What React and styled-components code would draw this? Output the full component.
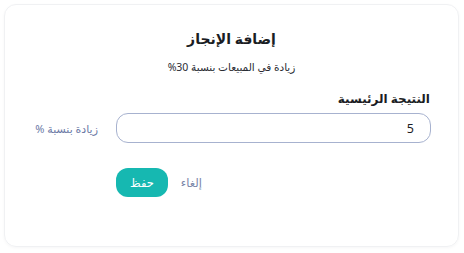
import React from 'react';
import styled, { createGlobalStyle } from 'styled-components';

const GlobalStyle = createGlobalStyle`
  html, body {
    margin: 0;
    padding: 0;
    background: #ffffff;
  }
  body {
    font-family: "Noto Sans", "DejaVu Sans", sans-serif;
  }
`;

const Page = styled.div`
  width: 464px;
  height: 253px;
  padding: 4px 5px 6px 4px;
  box-sizing: border-box;
`;

const Card = styled.div`
  direction: rtl;
  height: 100%;
  box-sizing: border-box;
  border: 1px solid #f0f1f3;
  border-radius: 12px;
  box-shadow: 0 1px 3px rgba(20, 30, 60, 0.04);
  padding: 23px 27px 0 27px;
  display: flex;
  flex-direction: column;
`;

const Title = styled.h2`
  margin: 0;
  text-align: center;
  font-size: 14px;
  font-weight: 700;
  color: #1b1d24;
  line-height: 22px;
`;

const Subtitle = styled.p`
  margin: 9px 0 0;
  text-align: center;
  font-size: 10.5px;
  color: #2a2c33;
  line-height: 16px;
`;

const FieldLabel = styled.div`
  margin-top: 15px;
  font-size: 12px;
  font-weight: 700;
  color: #1b1d24;
  line-height: 18px;
  padding-right: 1px;
`;

const FieldRow = styled.div`
  margin-top: 5px;
  display: flex;
  align-items: center;
  gap: 18px;
`;

const Input = styled.input`
  width: 315px;
  height: 30px;
  box-sizing: border-box;
  border: 1px solid #a7b2cf;
  border-radius: 12px;
  padding: 0 16px;
  font-family: inherit;
  font-size: 12.5px;
  color: #1b1d24;
  direction: rtl;
  outline: none;
  background: #fff;
`;

const Suffix = styled.span`
  font-size: 11px;
  color: #6c7aa6;
  white-space: nowrap;
`;

const Actions = styled.div`
  width: 315px;
  margin-top: 25px;
  display: flex;
  justify-content: flex-end;
  align-items: center;
  gap: 13px;
`;

const Button = styled.button`
  font-family: inherit;
  border: none;
  cursor: pointer;
  font-size: 11.5px;
  height: 29px;
  border-radius: 12px;
  padding: ${p => (p.$primary ? '0 14px' : '0')};
  min-width: ${p => (p.$primary ? '51px' : '0')};
  background: ${p => (p.$primary ? '#16b8b1' : 'transparent')};
  color: ${p => (p.$primary ? '#ffffff' : '#7a86a8')};
  font-weight: 400;
`;

export default function App() {
  return (
    <>
      <GlobalStyle />
      <Page>
        <Card>
          <Title>إضافة الإنجاز</Title>
          <Subtitle>زيادة في المبيعات بنسبة 30%</Subtitle>
          <FieldLabel>النتيجة الرئيسية</FieldLabel>
          <FieldRow>
            <Input defaultValue="5" />
            <Suffix>زيادة بنسبة %</Suffix>
          </FieldRow>
          <Actions>
            <Button>إلغاء</Button>
            <Button $primary>حفظ</Button>
          </Actions>
        </Card>
      </Page>
    </>
  );
}
